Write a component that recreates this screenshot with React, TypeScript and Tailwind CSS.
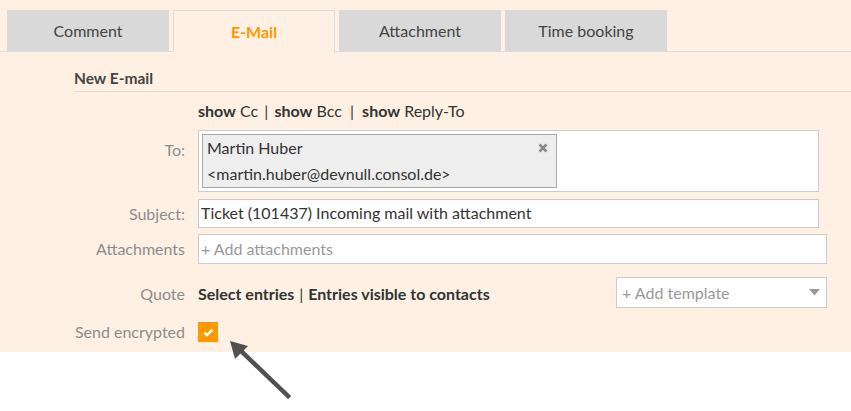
import React from "react";

const tabs = ["Comment", "E-Mail", "Attachment", "Time booking"];

function Label({ children, className = "" }: { children: React.ReactNode; className?: string }) {
  return (
    <div className={`w-[111px] shrink-0 text-right text-[16px] leading-[20px] text-[#8c8c8c] ${className}`}>
      {children}
    </div>
  );
}

export default function App() {
  return (
    <div className="relative h-[411px] w-[851px] overflow-hidden bg-white font-['Lato','Liberation_Sans',sans-serif]">
      <div className="h-[352px] bg-[#fef1e4]">
        {/* Tabs */}
        <div className="flex gap-[4px] border-b border-[#dcdcdc] pl-[7px] pt-[10px]">
          {tabs.map((t) => {
            const active = t === "E-Mail";
            return (
              <div
                key={t}
                className={
                  active
                    ? "mb-[-1px] flex h-[42px] w-[162px] items-center justify-center border border-b-0 border-[#dcdcdc] bg-[#fef1e4] pt-[1px] text-[16px] font-bold text-[#ff9900]"
                    : "flex h-[41px] w-[162px] items-center justify-center bg-[#d9d9d9] pt-[1px] text-[16px] text-[#444]"
                }
              >
                {t}
              </div>
            );
          })}
        </div>

        <div className="pl-[74px]">
          {/* Heading */}
          <div className="mt-[17px] border-b border-[#dcdcdc] pb-[4px] text-[15.5px] font-bold leading-[18px] text-[#444]">
            New E-mail
          </div>

          {/* show links */}
          <div className="ml-[124px] mt-[9px] text-[16px] leading-[20px] text-[#333]">
            <b>show</b> Cc <span className="mx-[2px]">|</span> <b>show</b> Bcc <span className="mx-[4px]">|</span>{" "}
            <b>show</b> Reply-To
          </div>

          {/* To */}
          <div className="mt-[9px] flex gap-[13px]">
            <Label className="pt-[10px]">To:</Label>
            <div className="h-[62px] w-[621px] border border-[#cccccc] bg-white p-[3px]">
              <div className="relative h-[54px] w-[355px] border border-[#aaaaaa] bg-[#eeeeee] pl-[4px] text-[16px] leading-[26px] text-[#333]">
                <div>Martin Huber</div>
                <div>&lt;martin.huber@devnull.consol.de&gt;</div>
                <svg className="absolute right-[8px] top-[8px]" width="10" height="10" viewBox="0 0 10 10">
                  <path d="M1.5 1.5 L8.5 8.5 M8.5 1.5 L1.5 8.5" stroke="#888" strokeWidth="2.6" />
                </svg>
              </div>
            </div>
          </div>

          {/* Subject */}
          <div className="mt-[7px] flex items-center gap-[13px]">
            <Label>Subject:</Label>
            <div className="flex h-[29px] w-[621px] items-center border border-[#cccccc] bg-white pb-[1px] pl-[2px] text-[16px] text-[#333]">
              Ticket (101437) Incoming mail with attachment
            </div>
          </div>

          {/* Attachments */}
          <div className="mt-[6px] flex items-center gap-[13px]">
            <Label>Attachments</Label>
            <div className="flex h-[30px] w-[629px] items-center border border-[#cccccc] bg-white pl-[2px] text-[16px] text-[#999]">
              + Add attachments
            </div>
          </div>

          {/* Quote */}
          <div className="mt-[13px] flex items-center gap-[13px]">
            <Label className="pt-[3px]">Quote</Label>
            <div className="flex w-[629px] items-center">
              <div className="pt-[3px] text-[16px] font-bold leading-[20px] text-[#333]">
                Select entries <span className="mx-[1px] font-normal">|</span> Entries visible to contacts
              </div>
              <div className="ml-auto flex h-[31px] w-[211px] items-center justify-between border border-[#cccccc] bg-white pl-[5px] pr-[6px] text-[16px] text-[#999]">
                + Add template
                <svg width="11" height="7" viewBox="0 0 11 7">
                  <path d="M0 0 H11 L5.5 6.5 Z" fill="#999" />
                </svg>
              </div>
            </div>
          </div>

          {/* Send encrypted */}
          <div className="mt-[14px] flex items-start gap-[13px]">
            <Label className="leading-[16px] text-left">Send encrypted</Label>
            <div className="flex h-[20px] w-[20px] items-center justify-center bg-[#ff9900]">
              <svg width="11" height="9" viewBox="0 0 11 9">
                <path d="M1.2 4.6 L4 7.2 L9.6 1.6" stroke="#fff" strokeWidth="2.4" fill="none" />
              </svg>
            </div>
          </div>
        </div>
      </div>

      {/* Pointer arrow */}
      <svg className="absolute left-[222px] top-[334px]" width="72" height="70" viewBox="0 0 72 70">
        <path d="M66 62 L18 16" stroke="#505050" strokeWidth="4.5" strokeLinecap="square" />
        <path d="M8 7 L26 12 L13 25 Z" fill="#505050" />
      </svg>
    </div>
  );
}
